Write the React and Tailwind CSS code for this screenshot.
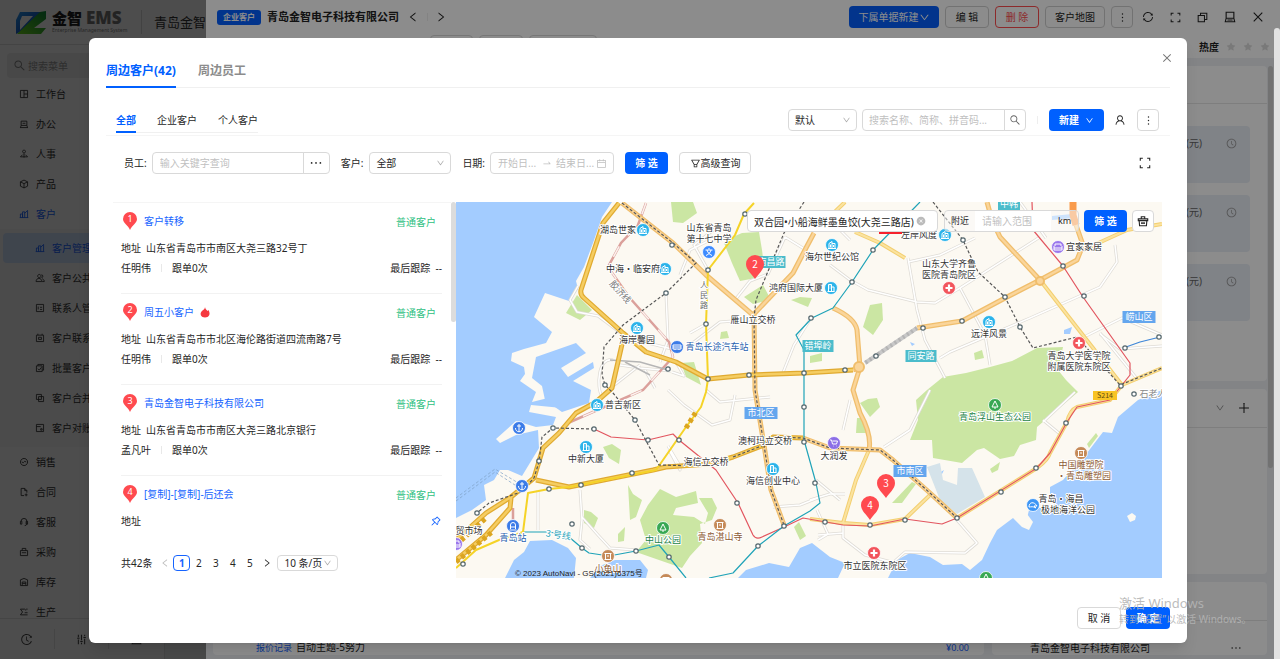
import { useState } from 'react';
import {
    AiOutlineSearch, AiOutlineClose, AiOutlineDown, AiOutlineUser, AiOutlineMore, AiOutlineEllipsis,
    AiOutlineLeft, AiOutlineRight, AiOutlineCalendar, AiOutlineSwapRight, AiOutlinePushpin,
    AiOutlineClockCircle, AiOutlineHistory, AiOutlineFilter,
    AiFillCloseCircle, AiFillStar, AiOutlineSync, AiOutlinePlus,
} from 'react-icons/ai';

const menu = [
    { label: '工作台', d: 'M2 2h10v10H2zM7 2v10M7 7h5' },
    { label: '办公', d: 'M3 3h8v6H3zM1.5 12h11M3 9l-1 3M11 9l1 3M5 6h4' },
    { label: '人事', d: 'M7 1.500a2 2 0 1 0 .1 0M7 6v6M2 11l3-3M12 11L9 8M2 11h10' },
    { label: '产品', d: 'M7 1.5l5 2.5v6l-5 2.5L2 10V4zM2 4l5 2.5L12 4M7 6.500v6' },
    { label: '客户', d: 'M2 12V7h3v5M5 12V4h3v8M8 6l4-4v10M1 12h12', active: true },
];

const subMenu = [
    { label: '客户管理', d: 'M2 12V7h3v5M5 12V4h3v8M8 6l4-4v10M1 12h12', active: true },
    { label: '客户公共池', d: 'M6 2a2.300 2.300 0 1 0 .1 0M9 2.500a2 2 0 1 1 0 4M1.500 12c0-6 8-6 8 0zM10 8c2 1 3 2 3 4h-3' },
    { label: '联系人管理', d: 'M2 2h10v10H2zM4.500 5v4M7 6h3M7 9h3' },
    { label: '客户联系', d: 'M2 3h10v9H2zM4 1v2M10 1v2M5 6h4v3H5z' },
    { label: '批量客户', d: 'M2 4h8v8H2zM4 4V2h8v8h-2M4 8l2 2 3-4' },
    { label: '客户合并', d: 'M2 2h7v7H2zM5 5h7v7H5z' },
    { label: '客户对账', d: 'M2 2h10v10H2zM2 5h6M8 8h2v2H8z' },
];

const menuRest = [
    { label: '销售', d: 'M7 2a5 5 0 1 0 .1 0M4 7l2 1 2-2 2 1' },
    { label: '合同', d: 'M7 12H3V2h5l3 3v3M8 2v3h3M10 9v4M8 11h4' },
    { label: '客服', d: 'M3 6a4 4 0 0 1 8 0v4a3 3 0 0 1-3 2M2 6h2v4H2zM10 6h2v4h-2z' },
    { label: '采购', d: 'M2 5h10v7H2zM4.500 5V2h5v3M4 8h6' },
    { label: '库存', d: 'M2 12V4l5-2 5 2v8zM4.500 12V7h5v5M4.500 9h5' },
    { label: '生产', d: 'M2 3h6l2 2M2 3l3 4-3 4h10M8 8h4M10 3h2' },
];

const customers = [
    { id: 1, name: '客户转移', address: '山东省青岛市市南区大尧三路32号丁', owner: '任明伟' },
    { id: 2, name: '周五小客户', address: '山东省青岛市市北区海伦路街道四流南路7号', owner: '任明伟', hot: true },
    { id: 3, name: '青岛金智电子科技有限公司', address: '山东省青岛市市南区大尧三路北京银行', owner: '孟凡叶' },
    { id: 4, name: '[复制]-[复制]-后还会', address: '', pinned: true },
];

// map: areas
const greens = [
    '671,202 693,202 697,213 683,223 673,222', '724,243 735,236 742,233 759,232 762,250 764,266 756,278 740,281 732,263',
    '744,297 763,285 771,300 753,304', '566,313 577,295 592,310 580,320', '791,300 800,297 812,298 808,307',
    '681,363 694,362 701,385 686,377', '870,305 882,303 883,320 873,335 863,327', '860,403 868,399 877,398 880,407 870,417',
    '857,418 862,418 866,433 856,433', '628,485 633,494 642,500 636,517 630,520', '603,447 612,444 621,450 619,464 609,458',
    '584,510 591,512 598,518 594,528 584,523', '618,534 625,527 624,541 618,542', '721,332 727,331 729,338 720,339',
    '810,356 822,353 822,361 810,363', '892,503 912,482 916,484 902,503', '1087,444 1096,433 1098,436 1089,448',
    '990,469 1000,462 998,470 992,473', '974,353 982,350 984,358 975,360', '794,527 799,522 806,536 800,540',
    '648,505 660,489 676,497 696,491 698,503 676,508 673,515 694,517 705,524 708,513 699,498 712,498 717,508 712,520 700,524 702,543 690,556 682,568 636,552 646,540 640,520',
    '927,390 943,377 966,373 990,367 1012,361 1037,348 1063,347 1058,370 1066,380 1078,392 1037,427 1036,440 1020,445 1014,456 1000,459 984,448 977,450 962,463 933,458 932,440 910,440 918,420 916,400',
];

const minorRoads = [
    'M620 365L640 368 671 371M613 360C598 356 596 388 602 396M660 362L668 340 666 293',
    'M640 341L676 350M690 345L720 322 760 319M708 270L694 245 716 228M680 275L690 250 710 240',
    'M735 300L750 281 768 274 785 237M785 237L806 250M578 286L570 300 577 312 598 316 622 334',
    'M668 390L684 405 712 425 730 420 735 395M669 450L680 470 680 466 668 446M706 390L720 402 770 397',
    'M580 490L582 520 580 540 590 549M538 490L538 530M582 517L598 535 610 548 636 550M782 375L794 345 811 318',
    'M830 265L850 280 868 290 917 302 935 303 960 288 1040 237M908 258L917 310 925 340 945 378',
    'M908 262L940 255 975 238M960 288L985 335 990 365M1115 245L1117 262 1100 287 1030 318 950 352 940 358',
    'M884 447L910 430 930 390M1078 340L1122 318 1162 335M1100 333L1138 380M1043 420L1060 434M1043 422L1075 392',
    'M810 500L830 494 845 494M843 524L843 538 865 555 895 563M843 533L818 535M957 520L977 543 965 553 905 552 888 567',
    'M1162 346L1120 349 1100 334M816 480L840 500M817 510L828 534 818 540M773 507L800 505 820 497M843 430L850 400',
    'M608 390L640 365M676 362L684 376 672 372M645 370L655 388M690 333L706 324M830 220L850 240M1020 202L1046 238',
];

const goldRoads = [
    'M619 203L603 223 581 290Q580 295 584 298L623 333 646 352 676 362 708 379 749 375 804 373 853 370',
    'M623 340L612 388 596 402 576 413 559 433 543 448 534 478 511 497 486 513 456 540',
    'M511 498L510 508 486 535 456 560M536 480L569 487 653 470 666 467 709 464 733 457 764 445 773 437 803 438',
];

const orangeRoads = [
    'M622 203L673 243 706 275 753 315M753 315L793 273 806 248 814 233',
    'M754 315L755 390 764 445 771 490 784 525M803 438L830 448 880 450 893 460 930 493 957 518',
    'M987 202L992 220 1000 237 1040 280M853 370L860 367M833 308Q855 318 857 330L860 367 853 390 860 413Q872 435 869 450',
    'M917 328L962 321 1007 297 1040 280 1077 260 1083 245 1076 225',
];

const yellowRoads = [
    'M869 450L856 480 843 523M810 519L843 523 870 525 905 519 930 495',
    'M957 518L1037 468Q1048 460 1050 453L1067 422Q1070 410 1077 407L1110 400 1122 385 1162 368M1040 280L1075 325 1122 385',
    'M1162 224L1127 230 1083 250M855 232L880 243 905 258M816 230L845 202',
];

const stations = [
    [672, 245], [708, 270], [666, 293], [706, 324], [708, 379], [749, 375], [804, 373], [668, 369], [605, 385], [745, 214],
    [811, 318], [852, 282], [873, 250], [963, 240], [1005, 297], [1020, 327], [1084, 296], [1063, 266], [923, 328], [962, 321],
    [876, 356], [845, 370], [1125, 348], [1159, 337], [1121, 386], [1134, 394], [1066, 423], [1036, 468], [1001, 492], [957, 518],
    [905, 520], [870, 525], [825, 522], [815, 483], [804, 442], [804, 407], [784, 526], [758, 546], [737, 503], [679, 440],
    [648, 440], [635, 420], [594, 429], [553, 428], [539, 461], [632, 473], [581, 485], [549, 489], [477, 513], [572, 524],
    [582, 548], [636, 551], [669, 557], [463, 564],
];

// x / y / text / colour
const labels = [
    [618, 233, '湖岛世家'], [709, 231, '山东省青岛'], [709, 242, '第十七中学'], [633, 272, '中海・临安府'],
    [637, 343, '海岸馨园'], [717, 350, '青岛长途汽车站', '#1f5fae'], [796, 291, '鸿府国际大厦'], [753, 323, '雁山立交桥'],
    [832, 260, '海尔世纪公馆'], [919, 238, '左岸风度'], [949, 267, '山东大学齐鲁'], [949, 278, '医院青岛院区'],
    [1084, 250, '宜家家居'], [989, 337, '远洋风景'], [1079, 359, '青岛大学医学院'], [1079, 370, '附属医院东院区'],
    [1153, 397, '石老人', '#888888'], [623, 408, '普吉新区'], [586, 462, '中新大厦'], [706, 465, '海信立交桥'],
    [765, 444, '澳柯玛立交桥'], [773, 484, '海信创业中心'], [834, 459, '大润发'], [995, 420, '青岛浮山生态公园', '#1d8348'],
    [1081, 468, '中国雕塑院', '#8d5a33'], [1084, 479, '・青岛雕塑园', '#8d5a33'], [1061, 502, '青岛・海昌'], [1068, 513, '极地海洋公园'],
    [875, 569, '市立医院东院区'], [663, 543, '中山公园', '#1d8348'], [720, 540, '青岛湛山寺', '#8d5a33'],
    [608, 572, '小鱼山', '#8d5a33'], [513, 541, '青岛站', '#1f5fae'], [469, 534, '贸市场'],
];

const districts = [
    [771, 262, 29, '南昌路', '#4bbccb'], [818, 346, 31, '错埠岭', '#4bbccb'], [921, 356, 31, '同安路', '#4bbccb'], [1009, 204, 22, '中韩', '#4bbccb'],
    [761, 413, 33, '市北区', '#64a6ee'], [910, 471, 33, '市南区', '#64a6ee'], [1139, 317, 33, '崂山区', '#64a6ee'],
];

const glyphs = {
    house: 'M-4 3.500h8M-3 3.500v-5l3-2v7M0-1.500h3v5M-1.500-.5v3M1.500 0v2',
    tower: 'M-3.500 3.500h7M-2.500 3.500v-7h3v7M.5-1h2.500v4.500M-1.500-2h1M-1.500 0h1',
    cross: 'M0-3.500v7M-3.500 0h7',
    tree: 'M0-4l-3 6h6zM0 2v2',
    temple: 'M-3.500-2.500h7M-2.500-2.500v6h5v-6M-3.500 3.500h7M-1 0h2',
    anchor: 'M0-4v7.500M-3.500 0c0 5 7 5 7 0M-2-2h4',
    bus: 'M-4-2h8v4h-8zM-4 0h8M-2 2v1M2 2v1',
    train: 'M-2.500 3v-4a2.500 2.500 0 0 1 5 0v4M-2.500 1h5M-3.500 4h7',
    cart: 'M-4-3h1.500l1 4h4l1-3h-5M-1 3h.5M2.500 3h.5',
    sofa: 'M-3-1v-2h6v2M-4-1v4h8v-4M-4 1h8',
    whale: 'M-4 2c0-5 5-6 8-1l-3 0 2 2c-3-2-5-1-7-1z',
    school: 'M0-4v1.500M-3.500-2h7M-2-2c1 3 2 4 5 5.500M2-2c-1 3-2 4-5 5.500',
};

const pois = [
    [643, 230, 'house', '#2bb3ea'], [709, 252, 'school', '#3d8bff'], [665, 269, 'house', '#2bb3ea'], [637, 328, 'house', '#2bb3ea'],
    [677, 347, 'bus', '#3b7be8'], [831, 288, 'tower', '#2bb3ea'], [832, 245, 'house', '#2bb3ea'], [945, 235, 'house', '#2bb3ea'],
    [949, 288, 'cross', '#f2545b'], [1058, 247, 'sofa', '#9a77ec'], [989, 322, 'house', '#2bb3ea'], [1079, 343, 'cross', '#f2545b'],
    [597, 405, 'house', '#2bb3ea'], [586, 447, 'tower', '#2bb3ea'], [773, 469, 'tower', '#2bb3ea'], [834, 443, 'cart', '#8c6ee6'],
    [995, 405, 'tree', '#38a854'], [1081, 453, 'temple', '#c58a58'], [1033, 505, 'whale', '#3d96f5'], [874, 553, 'cross', '#f2545b'],
    [663, 528, 'tree', '#38a854'], [720, 525, 'temple', '#c58a58'], [608, 556, 'temple', '#c58a58'], [513, 526, 'train', '#3b7be8'],
    [519, 428, 'anchor', '#3b7be8'], [522, 486, 'anchor', '#3b7be8'], [986, 578, 'tree', '#38a854'], [456, 544, 'sofa', '#9a77ec'], [666, 580, 'temple', '#c58a58'],
];

const pins = [[755, 265, 2], [886, 484, 3], [870, 506, 4]];

// line icons that the icon set draws differently
const icons = {
    expand: 'M1.500 4.500v-3h3M9.500 1.500h3v3M12.500 9.500v3h-3M4.500 12.500h-3v-3',
    windows: 'M1.500 4.500h8v8h-8zM4.500 4.500v-3h8v8h-3',
    dock: 'M2.500 1.500h9v7h-9zM2.500 8.500l-1 4h11l-1-4M4 10.500h6',
    close: 'M2 2l10 10M12 2L2 12',
    sliders: 'M3 1v3M3 7v6M1.500 5.500h3M7 1v7M7 11v2M5.500 9.500h3M11 1v2M11 6v7M9.500 4.500h3',
    basket: 'M5 4V2h4v2M1.500 4.500h11v2h-11zM2.500 6.500l.5 6h8l.5-6M5.500 8.500v2M7 8.500v2M8.500 8.500v2',
};

function LineIcon({ name, className }) {
    return (
        <svg viewBox="0 0 14 14" className={className} fill="none" stroke="currentColor" strokeWidth="1.300"><path d={icons[name]} /></svg>
    );
}

function RoadGroup({ paths, edge, fill, width }) {
    return (
        <g fill="none" strokeLinejoin="round">
            {paths.map((d) => <path key={d} d={d} stroke={edge} strokeWidth={width} />)}
            {paths.map((d) => <path key={'c' + d} d={d} stroke={fill} strokeWidth={width / 2} />)}
        </g>
    );
}

function CityMap() {
    return (
        <svg viewBox="456 202 706 376" preserveAspectRatio="xMidYMid slice" className="block h-full w-full bg-[#fcf9f2] font-['Noto_Sans_CJK_SC',sans-serif]">
            {/* sea */}
            <g fill="#a3ccff">
                <path d="M456 202H612L602 217 593 243 584 267 576 281 578 289 569 301 545 293 534 317 552 332 546 343 524 349 512 353 511 361 524 367 525 374 520 381 536 392 532 402 556 396 568 399 562 408 531 405 529 412 556 417 553 425 536 427 516 421 496 439 500 443 516 435 538 430 539 448 522 476 508 470 500 470 494 480 484 485 486 500 472 510 456 518Z" />
                <path d="M536 357L576 343 586 353 561 368 568 377 593 362 594 368 573 381 591 390 589 403 562 412 545 400 542 386 532 378Z" />
                <path d="M505 578L514 560 524 552 530 541 552 540 568 548 576 558 574 578ZM590 578L600 566 615 560 640 560 648 570 646 578Z" />
                <path d="M738 578L746 570 769 563 789 567 800 548 812 543 830 557 845 563 838 578Z" />
                <path d="M1162 390L1138 400 1118 417 1112 433 1103 432 1087 453 1072 470 1063 480 1050 487 1050 500 1057 507 1040 508 1030 506 1027 518 1013 518 997 530 990 543 982 560 970 570 962 564 943 565 930 557 910 553 897 560 888 578H1162Z" />
                <path d="M1052 216l20-2 2 4-22 2zM1064 330l8-3-2 7-6 0zM1055 362l6-1-2 5zM744 246l4-1-2 5zM910 342l5 2-3 2zM939 473l5-3-3 6z" />
            </g>
            <path d="M1127 516l5-3 4 3-1 4-5 2zM1013 518l14-4 6 8-4 8-7-3z" fill="#fcf9f2" />
            <path d="M927 467L940 463 943 480 957 485 958 468 972 468 985 497 957 514 940 500Z" fill="#d5e3ea" />
            <g fill="#cbe6a3">{greens.map((p) => <polygon key={p} points={p} />)}</g>
            <path d="M456 498L495 469 520 484M456 501L495 472 518 487" fill="none" stroke="#7d9fc4" strokeDasharray="3 2" strokeWidth="0.7" />

            <RoadGroup paths={minorRoads} edge="#dfdcd6" fill="#ffffff" width={3} />
            <path d="M646 203L638 225 621 243 608 267 629 297 669 342 673 357 643 390 568 423M513 508V520" fill="none" stroke="#dba09b" strokeWidth="2.500" />
            <path d="M646 203L638 225 621 243 608 267 629 297 669 342 673 357 643 390 568 423" fill="none" stroke="#fbf1ee" strokeWidth="1.500" strokeDasharray="12 14" />
            <path d="M610 360L640 362 668 370M625 362L650 375" fill="none" stroke="#b5b5b5" strokeWidth="1.500" />
            <RoadGroup paths={yellowRoads} edge="#f3cf70" fill="#fbe3a0" width={4} />
            <RoadGroup paths={orangeRoads} edge="#f0be6c" fill="#fad59a" width={5} />
            <RoadGroup paths={goldRoads} edge="#e0aa30" fill="#f5cd62" width={5} />
            <path d="M1076 225L1073 215V202" fill="none" stroke="#f99b4c" strokeWidth="7" />
            <path d="M917 328L865 363" fill="none" stroke="#c8c8c8" strokeWidth="4" />
            <path d="M917 328L865 363" fill="none" stroke="#b4b4b4" strokeWidth="4" strokeDasharray="2 3" />
            <circle cx="859" cy="367" r="5" fill="#fad59a" stroke="#f0be6c" strokeWidth="2" />
            <circle cx="1040" cy="281" r="4" fill="#fad59a" stroke="#f0be6c" strokeWidth="2" />

            {/* metro lines */}
            <g fill="none" strokeLinejoin="round" strokeWidth="1.200">
                <path d="M594 429L611 437 648 440 673 434 679 440 716 470 738 503 753 535Q756 540 762 537L784 527 803 518 843 525 870 526 905 519 942 524 957 518 1037 468 1050 453 1067 422 1077 407 1110 400 1122 385 1130 375V363L1083 297 1063 266 1033 230 1032 202" stroke="#e2555f" />
                <path d="M920 202L873 250 852 282 833 308 812 318 796 335 804 350V440L816 483 820 503 810 511 784 526 758 546 733 573 709 578M523 532H550L569 537 582 548 589 553 609 556 636 551 659 545 669 557 686 578" stroke="#1fa3b8" />
                <path d="M754 203L744 214 735 235 708 270 706 324 708 379 706 392 701 407 686 427 656 470 569 487 549 489 528 493 523 532 499 540 476 550 456 568" stroke="#f5d327" strokeWidth="2" />
                <path d="M1126 347L1140 342 1160 337" stroke="#3e86d8" />
            </g>
            <g fill="none" stroke="#565656" strokeWidth="1.200" strokeDasharray="3 2">
                <path d="M622 203L673 243 696 263 666 293 623 325 604 347 602 375 605 385 613 393 635 420 659 465 700 466" />
                <path d="M594 429L553 428 542 437 539 462 534 478 521 492 489 503 477 513" />
                <path d="M804 202L784 233 756 300 754 318 755 390 764 445 771 490 784 525M733 457L764 445 773 437 803 438 830 448 880 450 893 460 930 493 957 518" />
                <path d="M933 202L963 240 978 272 1005 297 1020 327 1033 348 1077 337 1120 385 1162 368" />
            </g>
            <path d="M456 545L486 518M456 562L492 532M686 428L696 412" stroke="#dba520" strokeWidth="5" strokeDasharray="4 3" fill="none" />
            <g fill="#ffffff" stroke="#55676d" strokeWidth="1.200">
                {stations.map(([x, y]) => <circle key={x + '-' + y} cx={x} cy={y} r="2.200" />)}
            </g>

            {pois.map(([x, y, type, color]) => (
                <g key={x + '-' + y} transform={`translate(${x} ${y})`}>
                    <circle r="6.500" fill={color} stroke="#ffffff" strokeWidth="0.800" />
                    <path d={glyphs[type]} fill="none" stroke="#ffffff" strokeWidth={type === 'cross' ? 2.2 : 1} />
                </g>
            ))}
            {districts.map(([x, y, w, text, color]) => (
                <g key={text}>
                    <rect x={x - w / 2} y={y - 6} width={w} height="12" fill={color} />
                    <text x={x} y={y + 3} textAnchor="middle" fontSize="9" fill="#ffffff">{text}</text>
                </g>
            ))}
            <rect x="1093" y="391" width="24" height="9" fill="#f8c325" />
            <text x="1105" y="398" textAnchor="middle" fontSize="7" fill="#5c4a10">S214</text>
            <g fontSize="9" textAnchor="middle" stroke="#ffffff" strokeWidth="2" strokeLinejoin="round" paintOrder="stroke">
                {labels.map(([x, y, text, color]) => <text key={text} x={x} y={y} fill={color || '#333333'}>{text}</text>)}
                <text x="558" y="538" fill="#1fa3b8" transform="rotate(8 558 538)">3 号线</text>
                <text x="618" y="294" fill="#777777" transform="rotate(48 618 294)">胶济线</text>
            </g>
            <g fontSize="8" textAnchor="middle" stroke="#ffffff" strokeWidth="2" paintOrder="stroke">
                <text x="704" y="288" fill="#6b6b6b">人</text>
                <text x="704" y="298" fill="#6b6b6b">民</text>
                <text x="704" y="308" fill="#6b6b6b">路</text>
            </g>
            <text x="515" y="576" fontSize="8" fill="#222222" className="font-['Liberation_Sans','Noto_Sans_CJK_SC',sans-serif]">© 2023 AutoNavi - GS(2021)6375号</text>
            <rect x="879" y="230" width="23" height="4" fill="#f5222d" />

            {pins.map(([x, y, n]) => (
                <g key={n} transform={`translate(${x} ${y})`}>
                    <path d="M0 14C-3 9-9 5-9-1A9 9 0 0 1 9-1C9 5 3 9 0 14Z" fill="#ff4a4f" />
                    <text y="3" textAnchor="middle" fontSize="10" fill="#ffffff">{n}</text>
                </g>
            ))}
        </svg>
    );
}

function MenuItem({ item, sub }) {
    return (
        <a href="#" className={`flex h-[30px] shrink-0 items-center gap-[7px] ${sub ? 'mx-[3px] rounded pl-8' : 'pl-[19px]'} ${item.active ? 'text-[#1664ff]' : 'text-[#333]'} ${sub && item.active ? 'bg-[#d4e5ff]' : ''}`}>
            <svg viewBox="0 0 14 14" className="size-[10px] shrink-0" fill="none" stroke="currentColor" strokeWidth="1.200"><path d={item.d} /></svg>
            <span className="whitespace-nowrap">{item.label}</span>
        </a>
    );
}

function AppShell() {
    return (
        <div className="flex h-full flex-col bg-[#f5f6f8]">
            <header className="flex h-[45px] shrink-0 items-center border-b border-[#e3e3e3] bg-white pl-4">
                <svg viewBox="0 0 30 23" className="h-[23px] w-[30px]">
                    <defs>
                        <linearGradient id="logoBlue" x1="0" y1="0" x2="1" y2="1"><stop stopColor="#2a9bf0" /><stop offset="1" stopColor="#0b2fb0" /></linearGradient>
                        <linearGradient id="logoGreen" x1="1" y1="0" x2="0" y2="1"><stop stopColor="#0c8c3c" /><stop offset="1" stopColor="#6edc1e" /></linearGradient>
                    </defs>
                    <path d="M4 1H25L8 19 0 23V9Z" fill="url(#logoBlue)" />
                    <path d="M6 5H17L4 19V10Z" fill="#ffffff" />
                    <path d="M30 0V8L18 17H30L25 23H1L24 1Z" fill="url(#logoGreen)" />
                </svg>
                <div className="ml-[6px] w-[90px] border-r border-[#ddd] whitespace-nowrap">
                    <div className="text-[15px] leading-[16px] font-black text-[#222]">金智 <span className="font-['Open_Sans',sans-serif] text-[17px] text-[#777]">EMS</span></div>
                    <div className="text-[5px] leading-[8px] text-[#888]">Enterprise Management System</div>
                </div>
                <span className="ml-3 text-[13px] text-[#333]">青岛金智测试</span>
            </header>
            <div className="flex min-h-0 flex-1">
                <aside className="flex w-[165px] flex-col border-r border-[#e5e5e5] bg-white">
                    <div className="mx-[7px] mt-2 mb-[1px] flex h-[25px] shrink-0 items-center gap-[2px] rounded bg-[#f0f0f0] pl-[6px] text-[#888]">
                        <AiOutlineSearch className="size-[13px]" />
                        <input aria-label="搜索菜单" placeholder="搜索菜单" className="w-28 bg-transparent outline-none placeholder:text-[#999]" />
                    </div>
                    <nav className="flex min-h-0 flex-1 flex-col overflow-hidden">
                        {menu.map((m) => <MenuItem key={m.label} item={m} />)}
                        <div className="shrink-0 bg-[#fafafa] py-1">
                            {subMenu.map((m) => <MenuItem key={m.label} item={m} sub />)}
                        </div>
                        {menuRest.map((m) => <MenuItem key={m.label} item={m} />)}
                    </nav>
                    <div className="grid h-[41px] shrink-0 grid-cols-3 items-center divide-x divide-[#e5e5e5] border-t border-[#e5e5e5] text-[#444]">
                        <button aria-label="历史" className="grid h-5 place-items-center"><AiOutlineHistory className="size-[13px]" /></button>
                        <button aria-label="设置" className="grid h-5 place-items-center"><LineIcon name="sliders" className="size-[11px]" /></button>
                        <button aria-label="桌面" className="grid h-5 place-items-center"><LineIcon name="dock" className="size-[11px]" /></button>
                    </div>
                </aside>
                <main className="flex-1" />
            </div>
        </div>
    );
}

function AmountCard({ label }) {
    return (
        <div className="flex h-[57px] shrink-0 rounded bg-[#e9eef6] pt-[10px] pr-[13px] text-[#666]">
            <span className="w-[193px] text-right">{label}</span>
            <AiOutlineClockCircle className="mt-[2px] ml-auto size-[11px] text-[#999]" />
        </div>
    );
}

function DetailDrawer() {
    const outline = 'h-[22px] rounded border border-[#d0d0d0] bg-white whitespace-nowrap';
    return (
        <div className="absolute inset-y-0 right-0 left-[206px] flex flex-col overflow-hidden bg-[#eef0f4] text-[#222]">
            <div className="flex h-[58px] shrink-0 flex-col bg-white">
                <div className="flex h-[34px] shrink-0 items-center justify-between pr-4 pl-[11px]">
                    <div className="flex items-center">
                        <span className="flex h-[15px] w-11 items-center justify-center rounded-[3px] bg-[#0560ff] text-[8px] font-bold text-white">企业客户</span>
                        <h1 className="ml-[6px] text-[11px] font-bold">青岛金智电子科技有限公司</h1>
                        <button aria-label="上一个" className="ml-2"><AiOutlineLeft className="size-3" /></button>
                        <i className="ml-2 h-2 w-px bg-[#eee]" />
                        <button aria-label="下一个" className="ml-[7px]"><AiOutlineRight className="size-3" /></button>
                    </div>
                    <div className="flex items-center gap-[6px]">
                        <button className="flex h-[22px] w-[90px] items-center justify-center rounded bg-[#0560ff] text-white">下属单据新建<AiOutlineDown className="size-[11px]" /></button>
                        <button className={`${outline} w-11`}>编 辑</button>
                        <button className="h-[22px] w-11 rounded border border-[#ff4d4f] bg-white text-[#ff4d4f]">删 除</button>
                        <button className={`${outline} w-[60px]`}>客户地图</button>
                        <button aria-label="更多" className="grid size-[22px] place-items-center rounded border border-[#d0d0d0] bg-white"><AiOutlineMore className="size-[13px]" /></button>
                        <div className="ml-[3px] flex items-center gap-4">
                            <AiOutlineSync className="size-3" />
                            <LineIcon name="expand" className="size-[11px]" />
                            <LineIcon name="windows" className="size-[11px]" />
                            <LineIcon name="dock" className="size-3" />
                            <LineIcon name="close" className="size-3" />
                        </div>
                    </div>
                </div>
                <div className="mt-[1px] flex items-center pr-[10px] pl-[224px]">
                    <button aria-label="跟进" className="h-5 w-[43px] rounded border border-[#d9d9d9]" />
                    <button aria-label="任务" className="ml-[6px] h-5 w-[44px] rounded border border-[#d9d9d9]" />
                    <button aria-label="附近客户" className="ml-[6px] h-5 w-[68px] rounded border border-[#d9d9d9]" />
                    <div className="ml-auto flex items-center gap-[7px] pt-1 text-[#dcdcdc]">
                        <strong className="text-[#222]">热度</strong>
                        <AiFillStar className="size-[10px]" /><AiFillStar className="size-[10px]" /><AiFillStar className="size-[10px]" />
                    </div>
                </div>
            </div>
            <div className="relative flex min-h-0 flex-1 gap-2 px-[7px] pt-2 pr-[13px] pb-1">
                <section className="flex min-w-0 flex-1 items-end justify-between rounded bg-white pr-[15px] pl-[43px]">
                    <p><a href="#" className="mr-1 text-[9px] text-[#1664ff]">报价记录</a>自动主题-5努力</p>
                    <span className="text-[9px] text-[#1664ff]">¥0.00</span>
                </section>
                <div className="flex w-[275px] shrink-0 flex-col gap-2">
                    <section className="flex h-[315px] shrink-0 flex-col rounded bg-white">
                        <div className="h-[38px] border-b border-[#e5e5e5]" />
                        <div className="flex flex-col gap-3 px-[17px] pt-[22px]">
                            <AmountCard label="回款(元)" /><AmountCard label="金额(元)" /><AmountCard label="金额(元)" />
                        </div>
                    </section>
                    <section className="h-[185px] shrink-0 rounded bg-white">
                        <div className="flex h-[39px] items-center justify-end gap-3 border-b border-[#e5e5e5] pr-4">
                            <AiOutlineDown className="size-[10px] text-[#888]" /><AiOutlinePlus className="size-[14px]" />
                        </div>
                    </section>
                    <section className="flex min-h-0 flex-1 flex-col rounded bg-white">
                        <div className="h-[39px] shrink-0 border-b border-[#e5e5e5]" />
                        <div className="mt-auto flex items-center justify-between pr-6 pl-[38px]"><span>青岛金智电子科技有限公司</span><AiOutlineEllipsis className="size-[14px]" /></div>
                    </section>
                </div>
                <div className="absolute top-2 right-[7px] h-[402px] w-[5px] rounded bg-[#cfcfcf]" />
            </div>
        </div>
    );
}

function SelectBox({ label, value, className }) {
    return (
        <div className={`relative ${className}`}>
            <select aria-label={label} className="h-full w-full appearance-none rounded border border-[#d9d9d9] bg-white pl-[6px] outline-none">
                <option>{value}</option>
            </select>
            <AiOutlineDown className="pointer-events-none absolute top-1/2 right-[6px] size-[9px] -translate-y-1/2 text-[#aaa]" />
        </div>
    );
}

function CustomerRow({ customer }) {
    return (
        <li className="mr-[9px] ml-2 h-[91px] shrink-0 border-b border-[#f2f2f2] pt-2">
            <div className="flex h-5 items-center">
                <svg viewBox="0 0 14 18" className="ml-[2px] h-[18px] w-[14px]">
                    <path d="M7 18C5 13 0 11 0 7A7 7 0 0 1 14 7C14 11 9 13 7 18Z" fill="#ff4a4f" />
                    <text x="7" y="10" textAnchor="middle" fontSize="9" fill="#ffffff">{customer.id}</text>
                </svg>
                <a href="#" className="ml-[7px] text-[#1664ff]">{customer.name}</a>
                {customer.hot && (
                    <svg viewBox="0 0 10 11" className="ml-[6px] h-[11px] w-[10px]"><path d="M5 0C5 2 7 3 7.500 4L8.500 3C9.500 5 10 7 9 8.500C8 11 2 11 1 8.500C0 6.500 1 4.500 2.500 3.500C4 2.500 5 1.500 5 0Z" fill="#f5383f" /></svg>
                )}
                <span className="mt-[2px] mr-[6px] ml-auto text-[#2fbf82]">普通客户</span>
            </div>
            <div className="mt-[7px] flex h-5 items-center gap-[5px]">
                <span>地址</span><span>{customer.address}</span>
                {customer.pinned && <AiOutlinePushpin className="ml-auto size-3 text-[#1664ff]" />}
            </div>
            {customer.owner && (
                <div className="flex h-5 items-center">
                    <span>{customer.owner}</span>
                    <i className="mx-[10px] h-2 w-px bg-[#e8e8e8]" />
                    <span>跟单0次</span>
                    <span className="ml-auto">最后跟踪&nbsp; --</span>
                </div>
            )}
        </li>
    );
}

function NearbyModal() {
    const [page, setPage] = useState(1);
    const primary = 'h-[22px] rounded bg-[#0060ff] text-white whitespace-nowrap';
    const field = 'h-[22px] rounded border border-[#d9d9d9] bg-white outline-none placeholder:text-[#bfbfbf]';

    return (
        <div role="dialog" aria-label="周边客户" className="relative w-full rounded-md bg-white pt-4 pb-[14px] text-[#262626] shadow-lg">
            <button aria-label="关闭" className="absolute top-[14px] right-[14px] text-[#777]"><AiOutlineClose className="size-3" /></button>

            <div className="mx-[17px] flex h-[34px] gap-[22px] border-b border-[#f0f0f0] text-[12px] font-bold">
                <button className="h-[34px] border-b-2 border-[#0060ff] pt-[2px] text-[#0060ff]">周边客户(42)</button>
                <button className="h-[34px] border-b-2 border-transparent pt-[2px] text-[#8c8c8c]">周边员工</button>
            </div>

            <div className="mx-[17px] flex items-start border-b border-[#f5f5f5] pt-[21px] pb-[2px]">
                <div className="ml-[10px] flex h-6 gap-[21px] border-b border-[#f0f0f0]">
                    <button className="h-6 border-b-2 border-[#0060ff] font-bold text-[#0060ff]">全部</button>
                    <button className="h-6 border-b-2 border-transparent">企业客户</button>
                    <button className="h-6 border-b-2 border-transparent">个人客户</button>
                </div>
                <SelectBox label="排序" value="默认" className="ml-auto h-[22px] w-[69px]" />
                <div className="ml-[5px] flex">
                    <input aria-label="搜索客户" placeholder="搜索名称、简称、拼音码..." className={`${field} w-[143px] rounded-r-none px-[6px]`} />
                    <button aria-label="搜索" className="-ml-px grid size-[22px] place-items-center rounded-r border border-[#d9d9d9] text-[#666]"><AiOutlineSearch className="size-3" /></button>
                </div>
                <i className="mx-[11px] mt-[7px] h-2 w-px bg-[#eee]" />
                <button className={`${primary} flex w-[55px] items-center justify-center gap-[6px] font-bold`}>新建<AiOutlineDown className="size-[9px]" /></button>
                <button aria-label="员工" className="mr-[11px] ml-[10px] grid h-[22px] place-items-center"><AiOutlineUser className="size-3" /></button>
                <button aria-label="更多" className="mr-[11px] grid size-[22px] place-items-center rounded border border-[#d9d9d9]"><AiOutlineMore className="size-[13px]" /></button>
            </div>

            <div className="mt-4 flex items-center pr-9 pl-[35px]">
                <label htmlFor="staff">员工:</label>
                <div className="ml-[5px] flex">
                    <input id="staff" placeholder="输入关键字查询" className={`${field} w-[152px] rounded-r-none px-[7px]`} />
                    <button aria-label="选择员工" className="-ml-px grid h-[22px] w-[27px] place-items-center rounded-r border border-[#d9d9d9]"><AiOutlineEllipsis className="size-4" /></button>
                </div>
                <span className="ml-[11px]">客户:</span>
                <SelectBox label="客户" value="全部" className="ml-[6px] h-[22px] w-[82px]" />
                <label htmlFor="start" className="ml-[11px]">日期:</label>
                <div className="ml-[5px] flex h-[22px] w-[124px] items-center rounded border border-[#d9d9d9] px-[7px] text-[#bfbfbf]">
                    <input id="start" placeholder="开始日..." className="w-10 outline-none placeholder:text-[#bfbfbf]" />
                    <AiOutlineSwapRight className="mx-[4px] size-[10px] shrink-0" />
                    <input aria-label="结束日期" placeholder="结束日..." className="w-10 outline-none placeholder:text-[#bfbfbf]" />
                    <AiOutlineCalendar className="ml-auto size-[11px] shrink-0" />
                </div>
                <button className={`${primary} ml-[11px] w-[43px] font-bold`}>筛 选</button>
                <button className="ml-[11px] flex h-[22px] w-[72px] items-center justify-center rounded border border-[#d9d9d9]"><AiOutlineFilter className="size-[11px]" />高级查询</button>
                <button aria-label="全屏" className="ml-auto"><LineIcon name="expand" className="size-3" /></button>
            </div>

            <div className="mt-7 mr-[25px] ml-6 flex h-[376px]">
                <div className="relative flex w-[343px] shrink-0 flex-col">
                    <ul className="mr-[5px] flex min-h-0 flex-1 flex-col overflow-hidden border-t border-[#f5f5f5]">
                        {customers.map((c) => <CustomerRow key={c.id} customer={c} />)}
                    </ul>
                    <div className="absolute top-0 right-0 h-[120px] w-[5px] rounded bg-[#dcdcdc]" />
                    <div className="mt-2 mb-[7px] flex h-4 items-center pl-2">
                        <span>共42条</span>
                        <button aria-label="上一页" className="ml-[8px] text-[#bbb]"><AiOutlineLeft className="size-[10px]" /></button>
                        <div className="mx-[3px] flex">
                            {[1, 2, 3, 4, 5].map((n) => (
                                <button key={n} onClick={() => setPage(n)} className={`h-4 w-[17px] rounded border ${n === page ? 'border-[#1664ff] font-bold text-[#1664ff]' : 'border-transparent'}`}>{n}</button>
                            ))}
                        </div>
                        <button aria-label="下一页" className="ml-[1px]"><AiOutlineRight className="size-[10px]" /></button>
                        <SelectBox label="每页条数" value="10 条/页" className="ml-[5px] h-4 w-[61px]" />
                    </div>
                </div>
                <div className="relative min-w-0 flex-1">
                    <CityMap />
                    <div className="absolute top-2 right-2 flex">
                        <div className="relative">
                            <input aria-label="地点" defaultValue="双合园•小船海鲜墨鱼饺(大尧三路店)" className={`${field} w-[191px] pr-5 pl-[6px]`} />
                            <AiFillCloseCircle className="absolute top-[6px] right-[12px] size-[10px] text-[#bbb]" />
                        </div>
                        <div className="ml-[6px] flex h-[22px] overflow-hidden rounded border border-[#d9d9d9]">
                            <label htmlFor="range" className="flex w-[30px] items-center justify-center bg-[#fafafa]/50 text-[9px] whitespace-nowrap">附近</label>
                            <input id="range" placeholder="请输入范围" className="w-[76px] bg-white px-[7px] outline-none placeholder:text-[#bfbfbf]" />
                            <span className="flex w-[27px] items-center justify-center bg-[#fafafa]/50 text-[9px]">km</span>
                        </div>
                        <button className={`${primary} ml-[5px] w-[43px] font-bold`}>筛 选</button>
                        <button aria-label="清除" className="ml-[5px] grid size-[22px] place-items-center rounded border border-[#d9d9d9] bg-white">
                            <LineIcon name="basket" className="size-3" />
                        </button>
                    </div>
                </div>
            </div>

            <div className="mt-[29px] mr-[17px] flex justify-end gap-[5px]">
                <button className={`${field} w-[44px]`}>取 消</button>
                <button className={`${primary} w-[44px] font-bold`}>确 定</button>
            </div>
        </div>
    );
}

export default function App() {
    return (
        <div className="relative h-screen overflow-hidden font-['Noto_Sans','Noto_Sans_CJK_SC',sans-serif] text-[10px] leading-[14px]">
            <AppShell />
            <div className="absolute inset-0 bg-black/45" />
            <DetailDrawer />
            <div className="absolute inset-0 bg-black/45 pt-[38px] pr-[93px] pl-[89px]">
                <NearbyModal />
            </div>
            {/* page scrollbar */}
            <div className="absolute top-7 right-0 bottom-0 w-[6px] rounded-t bg-[#e2e2e2]" />
            <div className="pointer-events-none absolute right-6 bottom-[33px] w-[137px] whitespace-nowrap text-[#b4b4b4]/90">
                <p className="text-[13px] leading-[18px]">激活 Windows</p>
                <p>转到“设置”以激活 Windows。</p>
            </div>
        </div>
    );
}
